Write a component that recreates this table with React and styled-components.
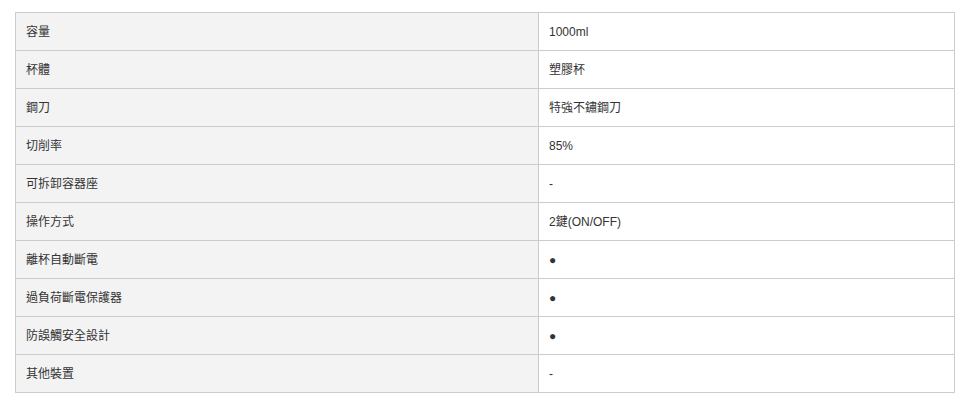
import styled, { createGlobalStyle } from 'styled-components';

const GlobalStyle = createGlobalStyle`
  body {
    margin: 0;
    background: #fff;
    font-family: "Liberation Sans", Arial, "Noto Sans CJK TC", sans-serif;
  }
`;

const Wrapper = styled.div`
  padding: 12px 11px 0 15px;
`;

const SpecTable = styled.table`
  width: 940px;
  border-collapse: collapse;
  table-layout: fixed;
  border: 1px solid #cccccc;
`;

const Row = styled.tr`
  height: 38px;
`;

const Cell = styled.td`
  box-sizing: border-box;
  height: 38px;
  padding: 0 10px;
  border: 1px solid #cccccc;
  font-size: 12px;
  line-height: 16px;
  color: #333333;
  vertical-align: middle;
  background: ${ ({ $label }) => ($label ? '#f3f3f3' : '#ffffff') };
  width: ${ ({ $label }) => ($label ? '523px' : 'auto') };
`;

const specs = [
  ['容量', '1000ml'],
  ['杯體', '塑膠杯'],
  ['鋼刀', '特強不鏽鋼刀'],
  ['切削率', '85%'],
  ['可拆卸容器座', '-'],
  ['操作方式', '2鍵(ON/OFF)'],
  ['離杯自動斷電', '●'],
  ['過負荷斷電保護器', '●'],
  ['防誤觸安全設計', '●'],
  ['其他裝置', '-'],
];

export default function App() {
  return (
    <Wrapper>
      <GlobalStyle />
      <SpecTable>
        <tbody>
          { specs.map(([label, value]) => (
            <Row key={ label }>
              <Cell $label>{ label }</Cell>
              <Cell>{ value }</Cell>
            </Row>
          )) }
        </tbody>
      </SpecTable>
    </Wrapper>
  );
}
